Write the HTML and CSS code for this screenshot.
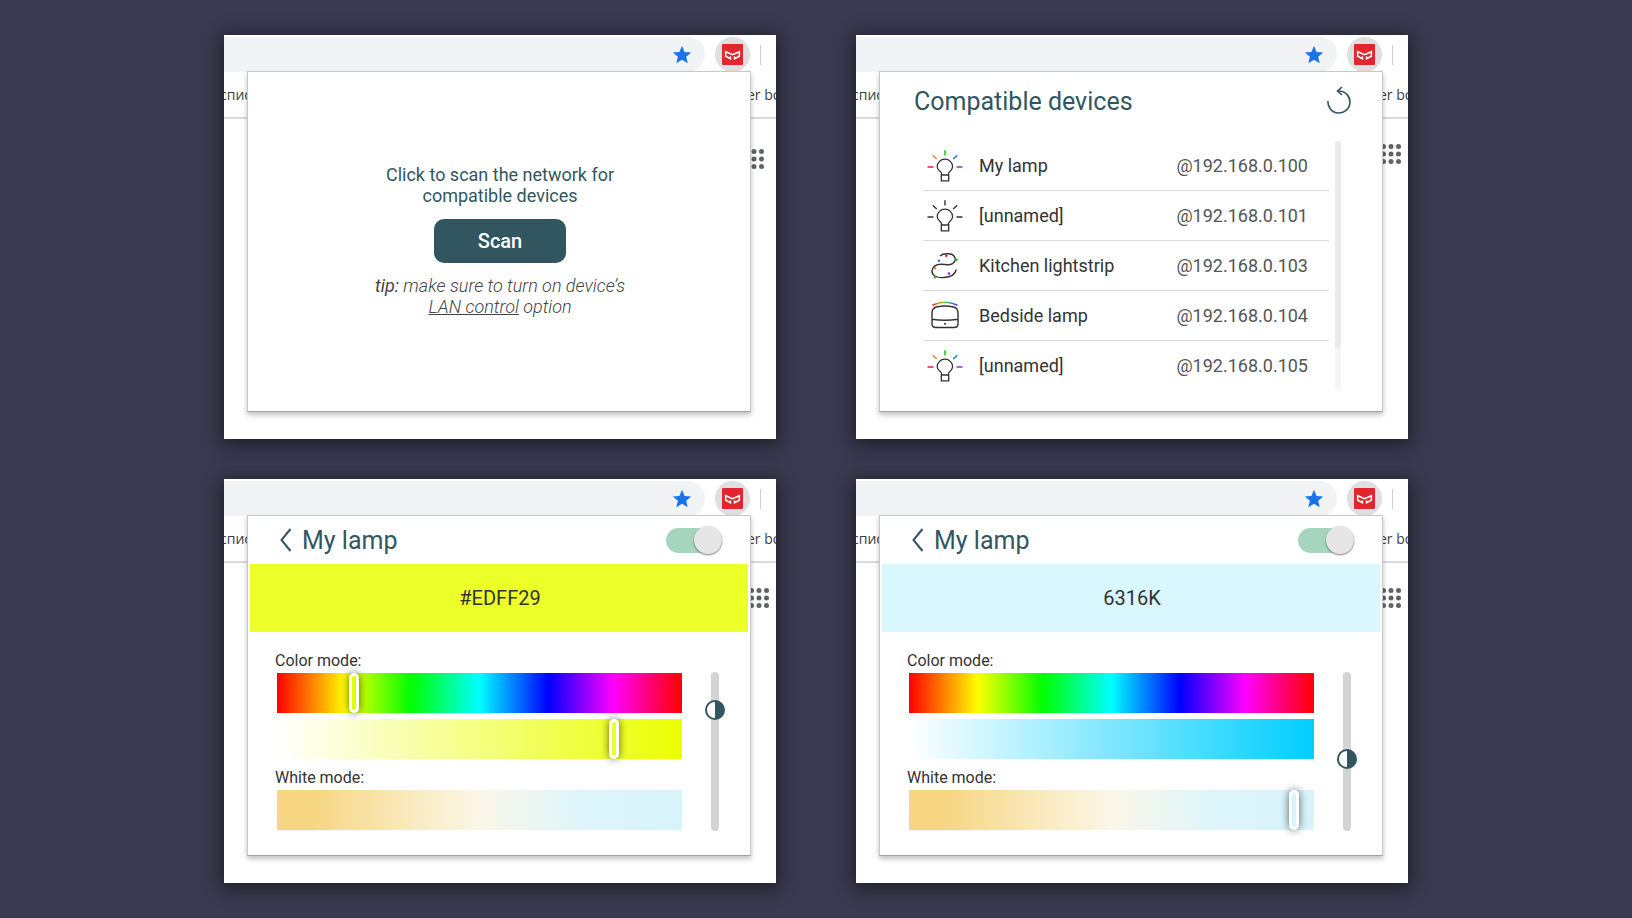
FILE: index.html
```
<!DOCTYPE html>
<html lang="en">
<head>
<meta charset="utf-8">
<title>Lamp control</title>
<link rel="stylesheet" href="styles.css">
</head>
<body>
<svg class="defs" aria-hidden="true">
  <defs>
    <linearGradient id="rainbow" x1="0" x2="1" y1="0" y2="0">
      <stop offset="0" stop-color="#e8202c"/><stop offset=".25" stop-color="#f08a1c"/><stop offset=".5" stop-color="#4fd83a"/><stop offset=".75" stop-color="#2a8fd0"/><stop offset="1" stop-color="#7a2bd0"/>
    </linearGradient>
    <symbol id="star" viewBox="0 0 24 24"><path fill="#1a73e8" d="M12 17.3 18.2 21l-1.6-7L22 9.2l-7.200-.6L12 2 9.200 8.600 2 9.200 7.500 14l-1.700 7z"/></symbol>
    <symbol id="ext" viewBox="0 0 20 20"><rect width="20" height="20" rx="1" fill="#e2262f"/><path fill="none" stroke="#fff" stroke-width="1.500" d="M8 12V14L3.500 11.700V7.300L10 10.200 16.500 7.300V11.700L12 14V12"/></symbol>
    <symbol id="apps" viewBox="0 0 20 20"><g fill="#5f6368"><circle cx="2.500" cy="2.500" r="2.500"/><circle cx="10" cy="2.500" r="2.500"/><circle cx="17.500" cy="2.500" r="2.500"/><circle cx="2.500" cy="10" r="2.500"/><circle cx="10" cy="10" r="2.500"/><circle cx="17.500" cy="10" r="2.500"/><circle cx="2.500" cy="17.500" r="2.500"/><circle cx="10" cy="17.500" r="2.500"/><circle cx="17.500" cy="17.500" r="2.500"/></g></symbol>
    <symbol id="bulb" viewBox="0 0 36 32"><g fill="none" stroke="#333" stroke-width="1.300"><path d="M14.500 25V23.500C14.500 21.500 10.200 20.500 10.200 16.800A7.700 7.700 0 0 1 25.600 16.800C25.600 20.500 21.500 21.500 21.500 23.500V25M14.300 25H21.700V30.800H14.300Z"/></g></symbol>
    <symbol id="color-bulb" viewBox="0 0 36 32"><use href="#bulb"/><g fill="none" stroke-width="1.500"><path stroke="#e3222c" d="M.5 17H6.500"/><path stroke="#f58220" d="M5.700 5.200 9.700 9"/><path stroke="#12c812" d="M18 .3V5.500"/><path stroke="#1b79c9" d="M26.200 9 30.200 5.200"/><path stroke="#9130c9" d="M29.500 17H35.500"/></g></symbol>
    <symbol id="white-bulb" viewBox="0 0 36 32"><use href="#bulb"/><path fill="none" stroke="#333" stroke-width="1.400" d="M.5 17H6.500M5.700 5.200 9.700 9M18 .3V5.500M26.200 9 30.200 5.200M29.500 17H35.500"/></symbol>
    <symbol id="strip" viewBox="0 0 36 32"><path fill="none" stroke="#333" stroke-width="1.400" d="M13 6C16 3.200 27 2 28.200 8.500C28.800 13 24 15.500 18 14.500C11 13.500 6 15 5 20.500C4.600 26 10 28 17 27.500C23 27.200 28 25 29.300 19.500"/><g><circle cx="19.300" cy="5.700" r="1.300" fill="#e3222c"/><circle cx="11.900" cy="10.800" r="1.300" fill="#1b79d9"/><circle cx="29.500" cy="9.700" r="1.300" fill="#12c812"/><circle cx="8" cy="18.200" r="1.300" fill="#f58220"/><circle cx="8" cy="27.200" r="1.300" fill="#12c812"/><circle cx="22" cy="23.600" r="1.300" fill="#9130c9"/></g></symbol>
    <symbol id="bedside" viewBox="0 0 36 32"><path fill="none" stroke="url(#rainbow)" stroke-width="1.500" d="M5.500 5.200Q18 -.6 30.500 5.200"/><path fill="none" stroke="#333" stroke-width="1.400" d="M5 24V13Q5 8 9.500 7Q18 5 26.500 7Q31 8 31 13V24Q31 27.500 27 27.500H9Q5 27.500 5 24ZM5 19.200Q18 21.400 31 19.200"/><circle cx="18" cy="23.700" r="1" fill="#333"/></symbol>
  </defs>
</svg>

<main class="wall">

<section class="shot">
  <div class="browser">
    <div class="toolbar">
      <div class="omnibox"><svg class="star"><use href="#star"/></svg></div>
      <div class="ext"><svg class="ext-icon"><use href="#ext"/></svg></div>
      <div class="divider"></div>
      <div class="avatar"></div>
    </div>
    <div class="bookmarks"><span class="mark-left">спис</span><span class="mark-right">er bo</span></div>
    <div class="page page-low"><svg class="apps"><use href="#apps"/></svg></div>
  </div>
  <div class="popup scan">
    <p class="prompt">Click to scan the network for<br>compatible devices</p>
    <button class="scan-button" type="button">Scan</button>
    <p class="tip"><span class="tip-label">tip:</span> make sure to turn on device’s<br><a class="tip-link" href="#lan">LAN control</a> option</p>
  </div>
</section>

<section class="shot">
  <div class="browser">
    <div class="toolbar">
      <div class="omnibox"><svg class="star"><use href="#star"/></svg></div>
      <div class="ext"><svg class="ext-icon"><use href="#ext"/></svg></div>
      <div class="divider"></div>
      <div class="avatar"></div>
    </div>
    <div class="bookmarks"><span class="mark-left">спис</span><span class="mark-right">er bo</span></div>
    <div class="page"><svg class="apps"><use href="#apps"/></svg></div>
  </div>
  <div class="popup">
    <header class="devices-head">
      <h1 class="title">Compatible devices</h1>
      <button class="icon-button" type="button" aria-label="Rescan"><svg class="refresh" viewBox="0 0 24 28"><g fill="none" stroke="#325660" stroke-width="1.600"><path d="M1 15A11 11 0 1 0 12 5H10.500"/><path d="M15 1 10.500 5 15 9"/></g></svg></button>
    </header>
    <div class="devices">
      <ul class="device-list">
        <li class="device"><svg class="device-icon"><use href="#color-bulb"/></svg><span class="device-name">My lamp</span><span class="device-ip">@192.168.0.100</span></li>
        <li class="device"><svg class="device-icon"><use href="#white-bulb"/></svg><span class="device-name">[unnamed]</span><span class="device-ip">@192.168.0.101</span></li>
        <li class="device"><svg class="device-icon"><use href="#strip"/></svg><span class="device-name">Kitchen lightstrip</span><span class="device-ip">@192.168.0.103</span></li>
        <li class="device"><svg class="device-icon"><use href="#bedside"/></svg><span class="device-name">Bedside lamp</span><span class="device-ip">@192.168.0.104</span></li>
        <li class="device"><svg class="device-icon"><use href="#color-bulb"/></svg><span class="device-name">[unnamed]</span><span class="device-ip">@192.168.0.105</span></li>
      </ul>
      <div class="scroll-track"><div class="scroll-thumb"></div></div>
    </div>
  </div>
</section>

<section class="shot">
  <div class="browser">
    <div class="toolbar">
      <div class="omnibox"><svg class="star"><use href="#star"/></svg></div>
      <div class="ext"><svg class="ext-icon"><use href="#ext"/></svg></div>
      <div class="divider"></div>
      <div class="avatar"></div>
    </div>
    <div class="bookmarks"><span class="mark-left">спис</span><span class="mark-right">er bo</span></div>
    <div class="page"><svg class="apps"><use href="#apps"/></svg></div>
  </div>
  <div class="popup">
    <header class="lamp-head">
      <button class="icon-button" type="button" aria-label="Back"><svg class="chevron" viewBox="0 0 12 24"><path fill="none" stroke="#325660" stroke-width="2" d="M10.500 1 1.500 12 10.500 23"/></svg></button>
      <h1 class="title">My lamp</h1>
      <input class="toggle" type="checkbox" role="switch" aria-label="Power" checked>
    </header>
    <div class="swatch swatch-yellow">#EDFF29</div>
    <div class="controls">
      <div class="modes">
        <label class="mode-label" for="hue-a">Color mode:</label>
        <input class="bar hue" id="hue-a" type="range" min="0" max="395" value="72">
        <input class="bar sat-yellow" type="range" min="0" max="395" value="332" aria-label="Saturation">
        <label class="mode-label" for="white-a">White mode:</label>
        <input class="bar white bar-idle" id="white-a" type="range" min="0" max="395" value="0">
      </div>
      <input class="brightness" type="range" min="0" max="139" value="111" aria-label="Brightness">
    </div>
  </div>
</section>

<section class="shot">
  <div class="browser">
    <div class="toolbar">
      <div class="omnibox"><svg class="star"><use href="#star"/></svg></div>
      <div class="ext"><svg class="ext-icon"><use href="#ext"/></svg></div>
      <div class="divider"></div>
      <div class="avatar"></div>
    </div>
    <div class="bookmarks"><span class="mark-left">спис</span><span class="mark-right">er bo</span></div>
    <div class="page"><svg class="apps"><use href="#apps"/></svg></div>
  </div>
  <div class="popup">
    <header class="lamp-head">
      <button class="icon-button" type="button" aria-label="Back"><svg class="chevron" viewBox="0 0 12 24"><path fill="none" stroke="#325660" stroke-width="2" d="M10.500 1 1.500 12 10.500 23"/></svg></button>
      <h1 class="title">My lamp</h1>
      <input class="toggle" type="checkbox" role="switch" aria-label="Power" checked>
    </header>
    <div class="swatch swatch-blue">6316K</div>
    <div class="controls">
      <div class="modes">
        <label class="mode-label" for="hue-b">Color mode:</label>
        <input class="bar hue bar-idle" id="hue-b" type="range" min="0" max="395" value="0">
        <input class="bar sat-blue bar-idle" type="range" min="0" max="395" value="0" aria-label="Saturation">
        <label class="mode-label" for="white-b">White mode:</label>
        <input class="bar white" id="white-b" type="range" min="0" max="395" value="380">
      </div>
      <input class="brightness" type="range" min="0" max="139" value="62" aria-label="Brightness">
    </div>
  </div>
</section>

</main>
</body>
</html>
```
FILE: styles.css
```
* { box-sizing: border-box; }
body {
  margin: 0;
  background: #39394f;
  font-family: Roboto, "Liberation Sans", sans-serif;
  color: #333;
}
h1, p, ul { margin: 0; padding: 0; }
svg { display: block; flex: none; }
.defs { position: absolute; width: 0; height: 0; }

.wall {
  display: grid;
  grid-template-columns: repeat(2, minmax(0, 552px));
  justify-content: center;
  gap: 40px 80px;
  padding: 35px 24px;
}
.shot {
  display: grid;
  background: #fff;
  box-shadow: 0 3px 16px 2px rgba(0, 0, 0, .5);
}
.browser, .popup { grid-area: 1 / 1; min-width: 0; }

/* Browser chrome behind each popup */
.browser { overflow: hidden; }
.toolbar { display: flex; align-items: center; padding-top: 2px; }
.omnibox {
  flex: 1;
  display: flex;
  align-items: center;
  justify-content: flex-end;
  height: 35px;
  padding-right: 12px;
  border-radius: 0 18px 18px 0;
  background: #f1f3f4;
}
.star { width: 22px; height: 22px; }
.ext {
  display: grid;
  place-items: center;
  width: 35px;
  height: 35px;
  margin-left: 10px;
  border-radius: 50%;
  background: #dfdfdf;
}
.ext-icon { width: 21px; height: 21px; }
.divider { width: 1px; height: 20px; margin: 0 15px 0 10px; background: #cfcfd2; }
.avatar { width: 35px; height: 35px; margin-right: -35px; border-radius: 50%; background: #d0d3d8; }
.bookmarks {
  display: flex;
  justify-content: space-between;
  height: 47px;
  padding-top: 13px;
  border-bottom: 2px solid #dadae1;
  font: 14px/20px "Open Sans", "Noto Sans", sans-serif;
  color: #3c4043;
}
.mark-left { margin-left: -4px; }
.mark-right { width: 29px; white-space: nowrap; }
.page { display: flex; justify-content: flex-end; padding: 25px 7px 0 0; }
.page-low { padding: 30px 12px 0 0; }
.apps { width: 20px; height: 20px; }

.popup {
  position: relative;
  min-height: 341px;
  margin: 36px 25px 27px 23px;
  border: 1px solid #c8c8c8;
  border-bottom-color: #a3a3a3;
  background: #fff;
  box-shadow: 0 3px 5px rgba(0, 0, 0, .25);
}
.title { font-size: 25px; line-height: 30px; font-weight: 400; color: #325660; }
.icon-button { padding: 0; border: 0; background: none; }

/* Scan prompt */
.scan { display: flex; flex-direction: column; align-items: center; padding: 92px 0 0 2px; text-align: center; }
.prompt, .tip { font-size: 18px; line-height: 21px; }
.prompt { color: #325660; }
.scan-button {
  width: 132px;
  height: 44px;
  margin: 13px 0 12px;
  border: 0;
  border-radius: 10px;
  background: #325660;
  font: 500 20px/24px Roboto, sans-serif;
  color: #fff;
}
.tip { font-style: italic; font-weight: 300; color: #444; }
.tip-label { font-weight: 400; }
.tip-link { color: inherit; text-decoration: underline; }

/* Device list */
.devices-head { display: flex; align-items: flex-end; justify-content: space-between; padding: 12px 31px 10px 34px; }
.icon-button .refresh { margin-bottom: 3px; }
.refresh { width: 24px; height: 28px; }
.devices { display: flex; gap: 6px; padding: 14px 41px 0 43px; }
.device-list { flex: 1; list-style: none; }
.device { display: flex; align-items: center; height: 50px; padding: 0 21px 0 4px; border-bottom: 1px solid #dadada; font-size: 18px; line-height: 22px; }
.device:last-child { border-bottom: 0; }
.device-icon { width: 36px; height: 32px; }
.device-name { flex: 1; padding-left: 16px; }
.device-ip { color: #555; }
.scroll-track { width: 6px; height: 249px; border-radius: 3px; background: #f5f5f5; }
.scroll-thumb { height: 207px; border-radius: 3px; background: #eaeaea; }
.devices-head .title { padding-top: 3px; }

/* Lamp controls */
.lamp-head { display: flex; align-items: center; height: 48px; padding: 0 28px 0 32px; }
.chevron { width: 12px; height: 24px; }
.lamp-head .title { flex: 1; padding: 2px 0 0 10px; }
.toggle { appearance: none; display: flex; align-items: center; justify-content: flex-end; width: 56px; height: 25px; margin: 0; border-radius: 13px; background: #a5d6bd; }
.toggle::before { content: ""; width: 28px; height: 28px; flex: none; border-radius: 50%; background: #e6e6e6; box-shadow: 0 1px 2px rgba(0, 0, 0, .5); }
.swatch { margin: 0 2px; padding-left: 2px; font-size: 20px; line-height: 68px; text-align: center; }
.swatch-yellow { background: #edff29; }
.swatch-blue { background: #d8f7ff; }
.controls { display: flex; gap: 23px; padding: 19px 25px 0 27px; }
.modes { flex: 1; display: flex; flex-direction: column; }
.mode-label { font-size: 16px; line-height: 20px; padding-bottom: 2px; }
.bar { appearance: none; width: auto; height: 40px; margin: 0 0 0 2px; }
.bar + .bar { margin-top: 6px; }
.bar + .mode-label { margin-top: 9px; }
.bar::-webkit-slider-thumb {
  appearance: none;
  width: 10px;
  height: 40px;
  border: 3px solid #fff;
  border-radius: 5px;
  background: transparent;
  box-shadow: 0 0 8px rgba(0, 0, 0, .6);
}
.bar-idle::-webkit-slider-thumb { visibility: hidden; }
.hue { background: linear-gradient(90deg, #f00, #ff0 17%, #0f0 33%, #0ff 50%, #00f 67%, #f0f 83%, #f00); }
.sat-yellow { background: linear-gradient(90deg, #fff, #eaff00); }
.sat-blue { background: linear-gradient(90deg, #fff, #00ceff); }
.white { background: linear-gradient(90deg, #f6d680 8%, #fbf7e8 50%, #ddf5fa 75%, #d8f3fb); }
.brightness { appearance: none; writing-mode: vertical-lr; direction: rtl; width: 20px; height: 159px; margin: 21px 0 0; background: none; }
.brightness::-webkit-slider-runnable-track { width: 8px; height: 100%; border-radius: 4px; background: #d3d3d3; }
.brightness::-webkit-slider-thumb {
  appearance: none;
  width: 20px;
  height: 20px;
  margin-left: -6px;
  border: 2px solid #325660;
  border-radius: 50%;
  background: linear-gradient(90deg, #fff 50%, #325660 50%);
}
```
